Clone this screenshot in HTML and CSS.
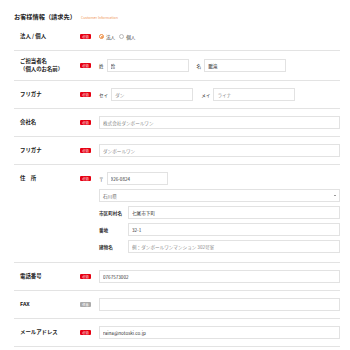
FILE: index.html
```html
<!DOCTYPE html>
<html lang="ja">
<head>
  <meta charset="UTF-8" />
  <title>お客様情報</title>
  <link rel="stylesheet" href="styles.css">
</head>
<body>
  <div class="wrap">
    <h2 class="heading">お客様情報（請求先）<span class="sub">Customer Information</span></h2>

    <div class="row">
      <div class="label">法人 / 個人</div>
      <div class="badge">必須</div>
      <div class="field radios">
        <span class="radio checked"></span><span class="rtext">法人</span>
        <span class="radio"></span><span class="rtext">個人</span>
      </div>
    </div>

    <div class="row">
      <div class="label">ご担当者名<br>（個人のお名前）</div>
      <div class="badge">必須</div>
      <div class="field pair">
        <span class="pre">姓</span><input class="input name" value="玲">
        <span class="pre gap">名</span><input class="input name" value="鵬滝">
      </div>
    </div>

    <div class="row">
      <div class="label">フリガナ</div>
      <div class="badge">必須</div>
      <div class="field pair">
        <span class="pre">セイ</span><input class="input name" placeholder="ダン">
        <span class="pre gap">メイ</span><input class="input name" placeholder="ライナ">
      </div>
    </div>

    <div class="row">
      <div class="label">会社名</div>
      <div class="badge">必須</div>
      <div class="field"><input class="input" placeholder="株式会社ダンボールワン"></div>
    </div>

    <div class="row">
      <div class="label">フリガナ</div>
      <div class="badge">必須</div>
      <div class="field"><input class="input" placeholder="ダンボールワン"></div>
    </div>

    <div class="row address">
      <div class="label">住　所</div>
      <div class="badge">必須</div>
      <div class="field stack">
        <div class="line"><span class="pre">〒</span><input class="input zip" value="926-0824"></div>
        <div class="select"><span>石川県</span><span class="arrow"></span></div>
        <div class="line"><span class="sublabel">市区町村名</span><input class="input" value="七尾市下町"></div>
        <div class="line"><span class="sublabel">番地</span><input class="input" value="32-1"></div>
        <div class="line"><span class="sublabel">建物名</span><input class="input" placeholder="例：ダンボールワンマンション 302号室"></div>
      </div>
    </div>

    <div class="row">
      <div class="label">電話番号</div>
      <div class="badge">必須</div>
      <div class="field"><input class="input" value="0767573002"></div>
    </div>

    <div class="row">
      <div class="label">FAX</div>
      <div class="badge optional">任意</div>
      <div class="field"><input class="input"></div>
    </div>

    <div class="row">
      <div class="label">メールアドレス</div>
      <div class="badge">必須</div>
      <div class="field"><input class="input" value="raina@notoski.co.jp"></div>
    </div>
  </div>
</body>
</html>
```

FILE: styles.css
```css
* { box-sizing: border-box; }

body {
  margin: 0;
  background: #fff;
  color: #333;
  font-family: "Noto Sans CJK JP", "Noto Sans", sans-serif;
}

.wrap {
  width: 326px;
  margin: 0 0 0 14px;
  padding-top: 12px;
}

.heading {
  margin: 0;
  font-size: 6.2px;
  font-weight: bold;
  line-height: 10px;
  color: #222;
}

.sub {
  margin-left: 5px;
  font-size: 3.6px;
  font-weight: normal;
  color: #f0965a;
}

.row {
  display: grid;
  grid-template-columns: 66px 19px 1fr;
  align-items: center;
  padding: 7px 0;
  border-bottom: 1px solid #e3e3e3;
}

.label {
  padding-left: 6px;
  font-size: 5.4px;
  font-weight: bold;
  line-height: 7.5px;
  color: #222;
}

.badge {
  width: 11px;
  height: 5px;
  background: #e60012;
  color: #fff;
  font-size: 3.2px;
  line-height: 5px;
  text-align: center;
  border-radius: 1px;
}

.badge.optional {
  background: #aaa;
}

.field {
  display: flex;
  align-items: center;
  min-height: 13px;
}

.radios {
  height: 13px;
  font-size: 4.6px;
}

.radio {
  width: 5px;
  height: 5px;
  border: 0.6px solid #bbb;
  border-radius: 50%;
  margin-right: 2px;
  position: relative;
}

.radio.checked {
  border-color: #ee8a3c;
}

.radio.checked::after {
  content: "";
  position: absolute;
  left: 1px;
  top: 1px;
  width: 2px;
  height: 2px;
  border-radius: 50%;
  background: #ee8a3c;
}

.rtext {
  margin-right: 4px;
}

.pre {
  font-size: 4.6px;
  margin-right: 3px;
}

.pre.gap {
  margin-left: 8px;
}

.input {
  width: 100%;
  height: 13px;
  margin: 0;
  padding: 0 3px;
  border: 1px solid #e2e2e2;
  border-radius: 0;
  font-family: inherit;
  font-size: 4.6px;
  color: #333;
  background: #fff;
  outline: none;
}

.input::placeholder {
  color: #888;
}

.input.name {
  width: 82px;
}

.input.zip {
  width: 61px;
}

.address {
  align-items: start;
  padding-bottom: 9px;
}

.address .badge {
  margin-top: 4px;
}

.address .label {
  margin-top: 3px;
}

.stack {
  flex-direction: column;
  align-items: stretch;
  gap: 4px;
}

.line {
  display: flex;
  align-items: center;
}

.sublabel {
  flex: none;
  width: 29px;
  font-size: 4.6px;
  font-weight: bold;
}

.select {
  display: flex;
  justify-content: space-between;
  align-items: center;
  height: 13px;
  padding: 0 3px;
  border: 1px solid #e2e2e2;
  font-size: 4.6px;
  color: #666;
}

.arrow {
  width: 0;
  height: 0;
  border-left: 1.3px solid transparent;
  border-right: 1.3px solid transparent;
  border-top: 1.6px solid #333;
}
```
